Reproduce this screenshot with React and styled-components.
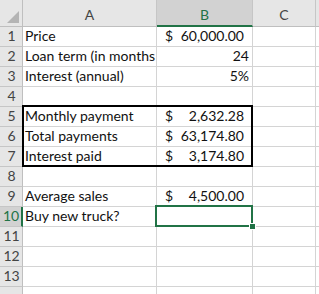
import React from "react";
import styled, { createGlobalStyle } from "styled-components";

const GREEN = "#217346";
const COLS = [23, 134, 96, 63];
const HEADER_H = 27;
const ROW_H = 20;

const rows = [
  { a: "Price", b: { acc: "60,000.00" } },
  { a: "Loan term (in months", b: { num: "24" } },
  { a: "Interest (annual)", b: { num: "5%" } },
  {},
  { a: "Monthly payment", b: { acc: "2,632.28" } },
  { a: "Total payments", b: { acc: "63,174.80" } },
  { a: "Interest paid", b: { acc: "3,174.80" } },
  {},
  { a: "Average sales", b: { acc: "4,500.00" } },
  { a: "Buy new truck?" },
  {},
  {},
  {},
  { hidden: true },
];

const Global = createGlobalStyle`
  html, body {
    margin: 0;
    padding: 0;
    background: #fff;
    overflow: hidden;
  }
  body {
    font-family: Lato, "Liberation Sans", sans-serif;
  }
`;

const Sheet = styled.div`
  position: relative;
  width: 319px;
  height: 294px;
  overflow: hidden;
`;

const Grid = styled.div`
  display: grid;
  grid-template-columns: ${COLS.map((c) => c + "px").join(" ")} 1fr;
  grid-template-rows: ${HEADER_H}px repeat(${rows.length}, ${ROW_H}px);
`;

const Corner = styled.div`
  position: relative;
  background: #e6e6e6;
  border-right: 1px solid #bfbfbf;
  border-bottom: 1px solid #bfbfbf;
  box-sizing: border-box;

  &::after {
    content: "";
    position: absolute;
    right: 3px;
    bottom: 3px;
    width: 0;
    height: 0;
    border-left: 12px solid transparent;
    border-bottom: 12px solid #b4b4b4;
  }
`;

const ColHead = styled.div`
  box-sizing: border-box;
  background: ${(p) => (p.$active ? "#d2d2d2" : "#e6e6e6")};
  border-right: 1px solid #c6c6c6;
  border-bottom: ${(p) => (p.$active ? `2px solid ${GREEN}` : "1px solid #bfbfbf")};
  color: ${(p) => (p.$active ? GREEN : "#444")};
  font-size: 14px;
  display: flex;
  align-items: center;
  justify-content: center;
  padding-top: 3px;
`;

const Filler = styled.div`
  background: #e6e6e6;
  border-bottom: 1px solid #bfbfbf;
`;

const RowHead = styled.div`
  box-sizing: border-box;
  background: ${(p) => (p.$active ? "#d2d2d2" : "#e6e6e6")};
  border-right: ${(p) => (p.$active ? `2px solid ${GREEN}` : "1px solid #bfbfbf")};
  border-bottom: 1px solid #c6c6c6;
  color: ${(p) => (p.$active ? GREEN : "#444")};
  font-size: 14px;
  display: flex;
  align-items: flex-end;
  justify-content: center;
  padding-bottom: 2px;
  padding-left: 1px;
`;

const Cell = styled.div`
  box-sizing: border-box;
  border-right: 1px solid #d4d4d4;
  border-bottom: 1px solid #d4d4d4;
  font-size: 14px;
  color: #111;
  white-space: nowrap;
  overflow: hidden;
  display: flex;
  align-items: flex-end;
  justify-content: ${(p) => (p.$right ? "flex-end" : "flex-start")};
  padding: 0 3px 2px 2px;
`;

const Accounting = styled(Cell)`
  justify-content: space-between;
  padding: 0 8px 2px 8px;
`;

const Blank = styled.div`
  border-bottom: 1px solid #d4d4d4;
`;

const RangeBox = styled.div`
  position: absolute;
  box-sizing: border-box;
  border: 2px solid ${(p) => p.$color};
  pointer-events: none;
`;

const Handle = styled.div`
  position: absolute;
  right: -5px;
  bottom: -5px;
  width: 7px;
  height: 7px;
  box-sizing: border-box;
  background: ${GREEN};
  border: 1px solid #fff;
`;

const colX = (i) => COLS.slice(0, i).reduce((s, c) => s + c, 0);
const rowY = (r) => HEADER_H + (r - 1) * ROW_H;

export default function App() {
  const selRow = 10;
  return (
    <Sheet>
      <Global />
      <Grid>
        <Corner />
        <ColHead>A</ColHead>
        <ColHead $active>B</ColHead>
        <ColHead>C</ColHead>
        <Filler />
        {rows.map((r, i) => {
          const n = i + 1;
          return (
            <React.Fragment key={n}>
              <RowHead $active={n === selRow}>{r.hidden ? "" : n}</RowHead>
              <Cell>{r.a}</Cell>
              {r.b && r.b.acc ? (
                <Accounting>
                  <span>$</span>
                  <span>{r.b.acc}</span>
                </Accounting>
              ) : (
                <Cell $right>{r.b && r.b.num}</Cell>
              )}
              <Cell />
              <Blank />
            </React.Fragment>
          );
        })}
      </Grid>
      <RangeBox
        $color="#000"
        style={{
          left: colX(1) - 1,
          top: rowY(5) - 2,
          width: COLS[1] + COLS[2] + 1,
          height: ROW_H * 3 + 2,
        }}
      />
      <RangeBox
        $color={GREEN}
        style={{
          left: colX(2) - 2,
          top: rowY(selRow) - 2,
          width: COLS[2] + 2,
          height: ROW_H + 2,
        }}
      >
        <Handle />
      </RangeBox>
    </Sheet>
  );
}
